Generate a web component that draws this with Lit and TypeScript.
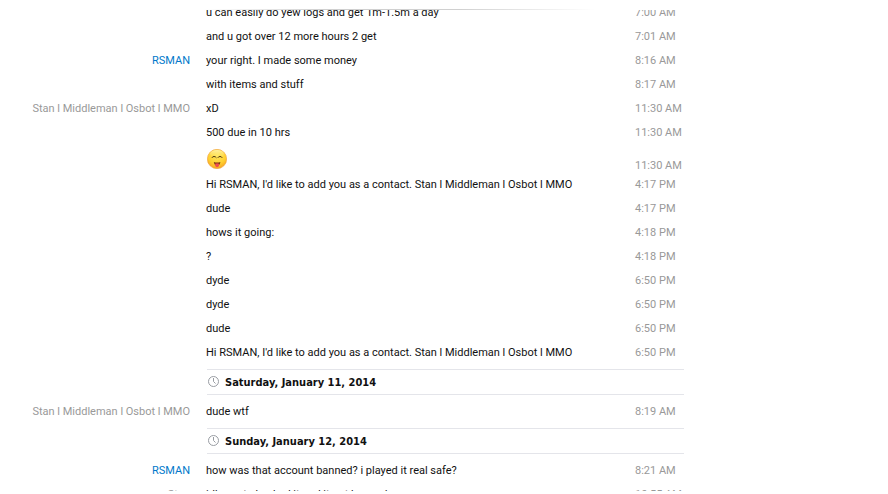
import { LitElement, html, css, svg, nothing } from "lit";
import { customElement } from "lit/decorators.js";

interface Message {
  kind: "message";
  text: string;
  time: string;
  from?: string;
  self?: boolean;
  emoji?: boolean;
}
interface Day {
  kind: "day";
  label: string;
}

const STAN = "Stan l Middleman l Osbot l MMO";
const msg = (text: string, time: string, extra: Partial<Message> = {}): Message => ({ kind: "message", text, time, ...extra });

const LOG: (Message | Day)[] = [
  msg("u can easily do yew logs and get 1m-1.5m a day", "7:00 AM"),
  msg("and u got over 12 more hours 2 get", "7:01 AM"),
  msg("your right. I made some money", "8:16 AM", { from: "RSMAN", self: true }),
  msg("with items and stuff", "8:17 AM"),
  msg("xD", "11:30 AM", { from: STAN }),
  msg("500 due in 10 hrs", "11:30 AM"),
  msg("", "11:30 AM", { emoji: true }),
  msg(`Hi RSMAN, I'd like to add you as a contact. ${STAN}`, "4:17 PM"),
  msg("dude", "4:17 PM"),
  msg("hows it going:", "4:18 PM"),
  msg("?", "4:18 PM"),
  msg("dyde", "6:50 PM"),
  msg("dyde", "6:50 PM"),
  msg("dude", "6:50 PM"),
  msg(`Hi RSMAN, I'd like to add you as a contact. ${STAN}`, "6:50 PM"),
  { kind: "day", label: "Saturday, January 11, 2014" },
  msg("dude wtf", "8:19 AM", { from: STAN }),
  { kind: "day", label: "Sunday, January 12, 2014" },
  msg("how was that account banned? i played it real safe?", "8:21 AM", { from: "RSMAN", self: true }),
  msg("idk went checked it and it got banned", "10:55 AM", { from: "Stan" }),
];

const smiley = svg`
  <svg class="smiley" viewBox="0 0 20 20" role="img" aria-label="Tongue out">
    <defs>
      <radialGradient id="face" cx="0.5" cy="0.3" r="0.75">
        <stop offset="0" stop-color="#ffe860" />
        <stop offset="0.6" stop-color="#ffd030" />
        <stop offset="1" stop-color="#f39a22" />
      </radialGradient>
      <linearGradient id="shine" x1="0" y1="0" x2="0" y2="1">
        <stop offset="0" stop-color="#fff0a0" />
        <stop offset="1" stop-color="#ffe668" stop-opacity="0" />
      </linearGradient>
    </defs>
    <circle cx="10" cy="10" r="9.7" fill="url(#face)" stroke="#f0a040" stroke-width="0.6" />
    <ellipse cx="10" cy="5" rx="7" ry="4" fill="url(#shine)" />
    <path d="M5 8.8 Q5.5 7.5 7 7.5 T9.4 8.8 M10.8 8.8 Q11.5 7.5 13 7.5 T15.2 8.8" fill="none" stroke="#4a3510" stroke-width="1" />
    <path d="M6.8 13 Q10 14 13.4 13 Q13 16.5 10 16.5 Q7.4 16.5 6.8 13Z" fill="#7a3412" />
    <path d="M8.2 14.8 Q10 13.8 12 14.8 V16.6 Q11.6 18.2 10 18.2 Q8.6 18.2 8.2 16.6Z" fill="#ef4b50" />
  </svg>`;

const clock = svg`
  <svg class="clock" viewBox="0 0 11 11" aria-hidden="true">
    <circle cx="5.5" cy="5.5" r="5" fill="none" stroke="#989ca2" />
    <path d="M5.5 2 V5.5 L7.5 7.5" fill="none" stroke="#989ca2" />
  </svg>`;

@customElement("app-root")
export class AppRoot extends LitElement {
  static styles = css`
    :host {
      display: block;
      height: 100vh;
      overflow: hidden;
      background: #fff;
      color: #111;
      font: 11px/14px Roboto, sans-serif;
    }
    .window {
      box-sizing: border-box;
      height: 100%;
      padding: 10px 0 3px;
      position: relative;
    }
    .edge {
      position: absolute;
      top: 9px;
      left: 23%;
      width: 44%;
      height: 1px;
      background: linear-gradient(90deg, transparent, #d0d0d0 30%, #d0d0d0 65%, transparent);
    }
    .log {
      height: 100%;
      overflow: hidden;
      display: flex;
      flex-direction: column;
      justify-content: flex-end;
    }
    .thread {
      flex: none;
      margin-bottom: -15px;
      max-width: 684px;
    }
    .row {
      display: grid;
      grid-template-columns: 190px 1fr 49px;
      column-gap: 16px;
      padding: 6px 0 4px;
    }
    .row.picture {
      align-items: end;
      padding: 5px 0 0;
    }
    .picture .time {
      line-height: 12px;
    }
    .from {
      text-align: right;
      color: #999;
    }
    .from.self {
      color: #0078ca;
    }
    .row > * {
      white-space: nowrap;
    }
    .time {
      color: #999;
    }
    .smiley {
      display: block;
      width: 20px;
      height: 20px;
      margin: 0 0 3px 1px;
    }
    .day {
      display: flex;
      align-items: flex-start;
      gap: 6px;
      margin: 5px 0 4px 207px;
      padding: 5px 1px 3px;
      border: solid #e4e5ea;
      border-width: 1px 0;
    }
    .day h2 {
      margin: 0;
      font: bold 11px/16px "DejaVu Sans Condensed", "DejaVu Sans", sans-serif;
      font-stretch: condensed;
    }
    .clock {
      width: 11px;
      height: 11px;
      margin-top: 1px;
    }
  `;

  private row(m: Message) {
    return html`<div class="row ${m.emoji ? "picture" : ""}">
      <span class="from ${m.self ? "self" : ""}">${m.from ?? nothing}</span>
      <span class="text">${m.emoji ? smiley : m.text}</span>
      <time class="time">${m.time}</time>
    </div>`;
  }

  private day(d: Day) {
    return html`<div class="day">${clock}<h2>${d.label}</h2></div>`;
  }

  render() {
    return html`<main class="window">
      <div class="log"><div class="thread">${LOG.map((e) => (e.kind === "day" ? this.day(e) : this.row(e)))}</div></div>
      <div class="edge"></div>
    </main>`;
  }
}
